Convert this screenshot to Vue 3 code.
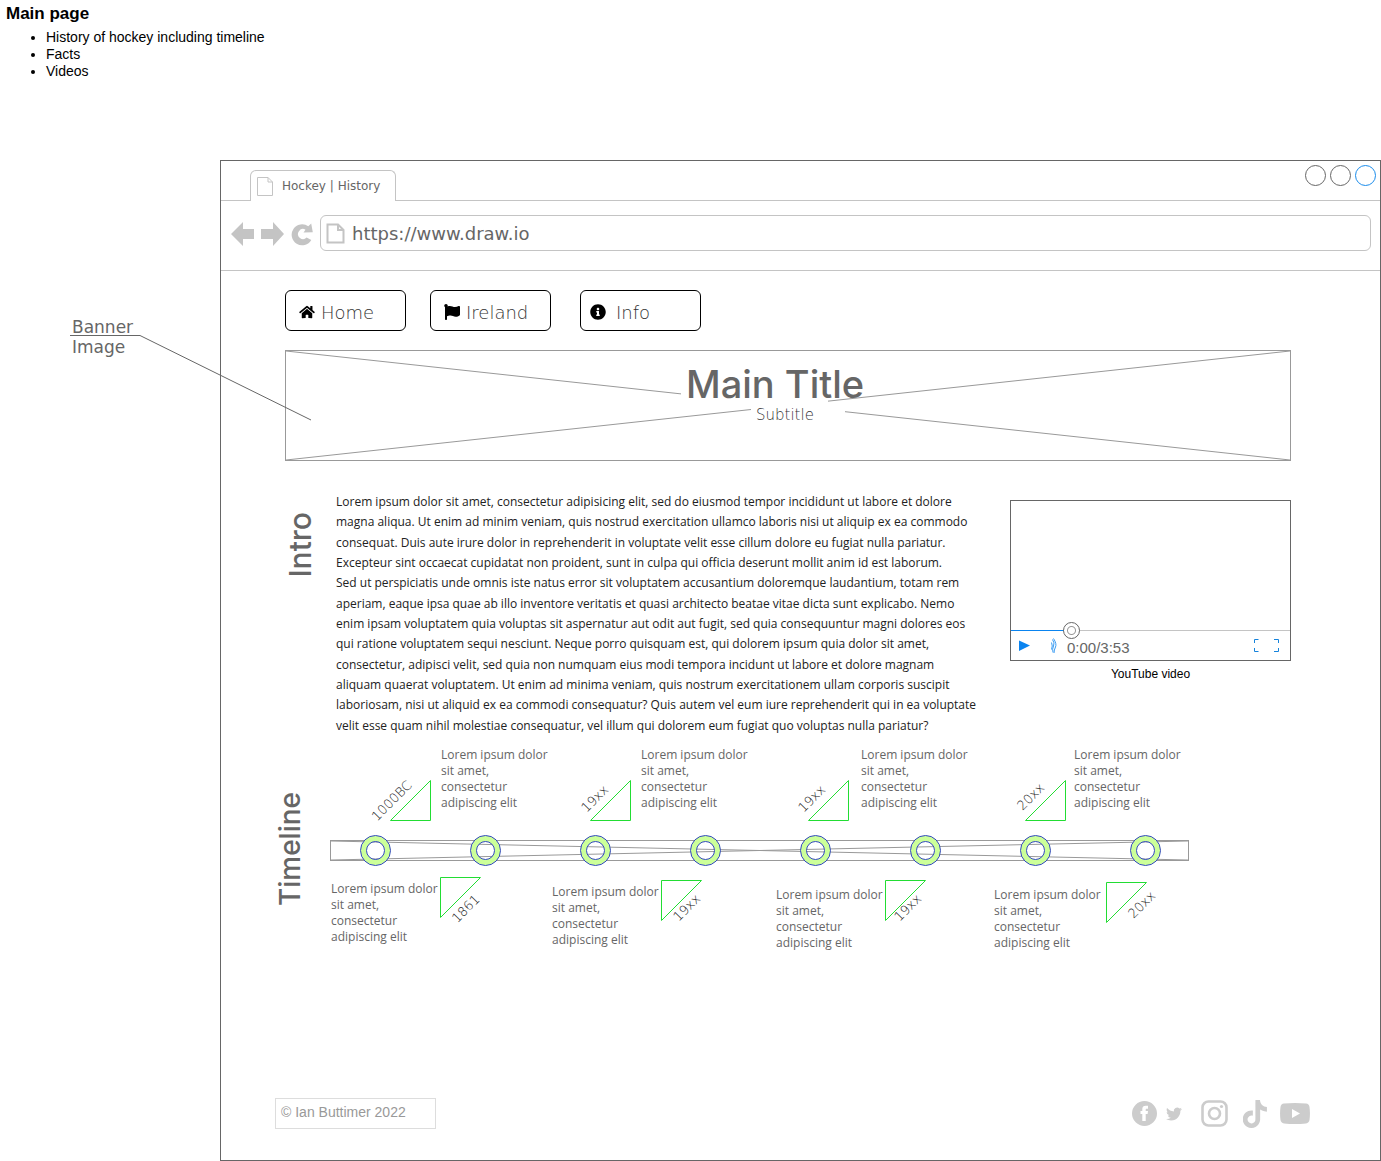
<script setup>
import { ref } from 'vue'

const position = ref(20)

const notes = ['History of hockey including timeline', 'Facts', 'Videos']

const intro = [
  [
    'Lorem ipsum dolor sit amet, consectetur adipisicing elit, sed do eiusmod tempor incididunt ut labore et dolore',
    'magna aliqua. Ut enim ad minim veniam, quis nostrud exercitation ullamco laboris nisi ut aliquip ex ea commodo',
    'consequat. Duis aute irure dolor in reprehenderit in voluptate velit esse cillum dolore eu fugiat nulla pariatur.',
    'Excepteur sint occaecat cupidatat non proident, sunt in culpa qui officia deserunt mollit anim id est laborum.',
  ],
  [
    'Sed ut perspiciatis unde omnis iste natus error sit voluptatem accusantium doloremque laudantium, totam rem',
    'aperiam, eaque ipsa quae ab illo inventore veritatis et quasi architecto beatae vitae dicta sunt explicabo. Nemo',
    'enim ipsam voluptatem quia voluptas sit aspernatur aut odit aut fugit, sed quia consequuntur magni dolores eos',
    'qui ratione voluptatem sequi nesciunt. Neque porro quisquam est, qui dolorem ipsum quia dolor sit amet,',
    'consectetur, adipisci velit, sed quia non numquam eius modi tempora incidunt ut labore et dolore magnam',
    'aliquam quaerat voluptatem. Ut enim ad minima veniam, quis nostrum exercitationem ullam corporis suscipit',
    'laboriosam, nisi ut aliquid ex ea commodi consequatur? Quis autem vel eum iure reprehenderit qui in ea voluptate',
    'velit esse quam nihil molestiae consequatur, vel illum qui dolorem eum fugiat quo voluptas nulla pariatur?',
  ],
]

const eventText = ['Lorem ipsum dolor', 'sit amet,', 'consectetur', 'adipiscing elit']

// Canvas coordinates: flag = triangle corner, date = centre of the slanted label, text = top left of the note
const events = [
  { date: '1000BC', up: true, flag: [60, 40], label: [62, 61], text: [111, 7] },
  { date: '1861', up: false, flag: [110, 137], label: [136, 169], text: [1, 141] },
  { date: '19xx', up: true, flag: [260, 40], label: [265, 59], text: [311, 7] },
  { date: '19xx', up: false, flag: [331, 140], label: [357, 168], text: [222, 144] },
  { date: '19xx', up: true, flag: [478, 40], label: [482, 59], text: [531, 7] },
  { date: '19xx', up: false, flag: [555, 140], label: [578, 168], text: [446, 147] },
  { date: '20xx', up: true, flag: [695, 40], label: [701, 57], text: [744, 7] },
  { date: '20xx', up: false, flag: [776, 142], label: [812, 165], text: [664, 147] },
]

const at = ([x, y]) => ({ left: x + 'px', top: y + 'px' })
</script>

<template>
  <div class="page">
    <header class="notes">
      <h1>Main page</h1>
      <ul>
        <li v-for="note in notes" :key="note">{{ note }}</li>
      </ul>
    </header>

    <aside class="callout">
      <span>Banner</span>
      <span>Image</span>
      <svg width="242" height="88" viewBox="0 0 242 88" aria-hidden="true">
        <path d="M0 1.5H70L241 86" fill="none" stroke="#666" />
      </svg>
    </aside>

    <div class="browser">
      <div class="tabs">
        <div class="tab">
          <svg width="16" height="19" viewBox="0 0 16 19" aria-hidden="true">
            <path d="M.5.5H11L15.500 5V18.500H.5ZM11 .5V5H15.500" fill="#fff" stroke="#c4c4c4" />
          </svg>
          <span>Hockey | History</span>
        </div>
        <div class="controls">
          <button type="button" aria-label="Minimise"></button>
          <button type="button" aria-label="Maximise"></button>
          <button type="button" aria-label="Close" class="close"></button>
        </div>
      </div>

      <div class="toolbar">
        <button type="button" aria-label="Back">
          <svg width="24" height="26" viewBox="0 0 24 26"><path d="M0 13L12 1V8H23V18H12V25Z" /></svg>
        </button>
        <button type="button" aria-label="Forward">
          <svg width="24" height="26" viewBox="0 0 24 26"><path d="M23 13L12 1V8H0V18H12V25Z" /></svg>
        </button>
        <button type="button" aria-label="Reload" class="reload">
          <svg width="22" height="24" viewBox="0 0 22 24">
            <path d="M17.300 4.200L20.200 1.500L21.800 10.200L12.500 10.600L14.500 7.700A5 5 0 1 0 15.600 15.600L20.300 17.900A10.500 10.500 0 1 1 17.300 4.200Z" />
          </svg>
        </button>
        <label class="address">
          <svg width="19" height="21" viewBox="0 0 19 21" aria-hidden="true">
            <path d="M1.500 1.500H12L17.500 7V19.500H1.500ZM12 1.500V7H17.500" fill="#fff" stroke="#c4c4c4" stroke-width="2" />
          </svg>
          <input type="text" value="https://www.draw.io" aria-label="Address" />
        </label>
      </div>

      <main class="site">
        <nav>
          <a href="#home">
            <svg width="16" height="14" viewBox="0 0 576 512"><path d="M280.37 148.26L96 300.11V464a16 16 0 0 0 16 16l112.06-.29a16 16 0 0 0 15.92-16V368a16 16 0 0 1 16-16h64a16 16 0 0 1 16 16v95.64a16 16 0 0 0 16 16.05L464 480a16 16 0 0 0 16-16V300L295.67 148.26a12.19 12.19 0 0 0-15.3 0zM571.6 251.47L488 182.56V44.05a12 12 0 0 0-12-12h-56a12 12 0 0 0-12 12v72.61L318.47 43a48 48 0 0 0-61 0L4.34 251.47a12 12 0 0 0-1.6 16.9l25.500 31A12 12 0 0 0 45.150 301l235.220-193.740a12.190 12.190 0 0 1 15.300 0L530.900 301a12 12 0 0 0 16.900-1.600l25.500-31a12 12 0 0 0-1.700-16.930z" /></svg>
            <span>Home</span>
          </a>
          <a href="#ireland">
            <svg width="16" height="16" viewBox="0 0 512 512"><path d="M349.565 98.783C295.978 98.783 251.721 64 184.348 64c-24.955 0-47.309 4.384-68.045 12.013a55.947 55.947 0 0 0 3.586-23.562C118.117 24.015 94.806 1.206 66.338.048 34.345-1.254 8 24.296 8 56c0 19.026 9.497 35.825 24 45.945V488c0 13.255 10.745 24 24 24h16c13.255 0 24-10.745 24-24v-94.4c28.311-12.064 63.582-22.122 114.435-22.122 53.588 0 97.844 34.783 165.217 34.783 48.169 0 86.667-16.294 122.505-40.858C506.84 359.452 512 349.571 512 339.045v-243.100c0-23.393-24.269-38.870-45.485-29.016-34.338 15.948-76.454 31.854-116.950 31.854z" /></svg>
            <span>Ireland</span>
          </a>
          <a href="#info" class="info">
            <svg width="16" height="16" viewBox="0 0 512 512"><path d="M256 8C119.043 8 8 119.083 8 256c0 136.997 111.043 248 248 248s248-111.003 248-248C504 119.083 392.957 8 256 8zm0 110c23.196 0 42 18.804 42 42s-18.804 42-42 42-42-18.804-42-42 18.804-42 42-42zm56 254c0 6.627-5.373 12-12 12h-88c-6.627 0-12-5.373-12-12v-24c0-6.627 5.373-12 12-12h12v-64h-12c-6.627 0-12-5.373-12-12v-24c0-6.627 5.373-12 12-12h64c6.627 0 12 5.373 12 12v100h12c6.627 0 12 5.373 12 12v24z" /></svg>
            <span>Info</span>
          </a>
        </nav>

        <section class="banner">
          <svg class="cross" viewBox="0 0 100 100" preserveAspectRatio="none" aria-hidden="true">
            <path d="M0 0L100 100M0 100L100 0" />
          </svg>
          <div class="titles">
            <h2>Main Title</h2>
            <p>Subtitle</p>
          </div>
        </section>

        <section class="intro">
          <h3>Intro</h3>
          <article>
            <p v-for="(paragraph, i) in intro" :key="i">
              <span v-for="line in paragraph" :key="line">{{ line }}</span>
            </p>
          </article>
          <figure>
            <div class="player">
              <div class="screen"></div>
              <input v-model="position" type="range" min="0" max="100" aria-label="Playback position" />
              <div class="buttons">
                <button type="button" aria-label="Play">
                  <svg width="11" height="12" viewBox="0 0 11 12"><path d="M0 .5L11 5.500L0 11Z" fill="#0a84f0" /></svg>
                </button>
                <button type="button" aria-label="Volume" class="volume">
                  <svg width="6" height="16" viewBox="0 0 6 16">
                    <path d="M.5 4.500Q2 8 .5 11.500M1.500 1.500Q4 5 2.500 8T2 14.500M2.500 .5Q6 6 4.500 9T3 15" fill="none" stroke="#3a9cf3" />
                  </svg>
                </button>
                <span>0:00/3:53</span>
                <button type="button" aria-label="Full screen" class="full">
                  <svg width="26" height="14" viewBox="0 0 26 14">
                    <path d="M5.500 .5H1.500V4M1.500 9V12.500H5.500M21 .5H25.500V4M25.500 9V12.500H21" fill="none" stroke="#1583dc" />
                  </svg>
                </button>
              </div>
            </div>
            <figcaption>YouTube video</figcaption>
          </figure>
        </section>

        <section class="timeline">
          <h3>Timeline</h3>
          <div class="canvas">
            <div class="bar">
              <svg class="cross" viewBox="0 0 100 100" preserveAspectRatio="none" aria-hidden="true">
                <path d="M0 0L100 100M0 100L100 0" />
              </svg>
              <svg v-for="n in 8" :key="n" class="ring" width="31" height="31" viewBox="0 0 31 31" aria-hidden="true">
                <circle cx="15.5" cy="15.5" r="12" fill="none" stroke="#ccff99" stroke-width="6" />
                <circle cx="15.5" cy="15.5" r="15" fill="none" stroke="#3348c0" />
                <circle cx="15.5" cy="15.5" r="9" fill="none" stroke="#3348c0" />
              </svg>
            </div>
            <template v-for="(event, i) in events" :key="i">
              <svg class="flag" :style="at(event.flag)" width="42" height="42" viewBox="0 0 42 42" aria-hidden="true">
                <path :d="event.up ? 'M.5 40.5H40.5V.5Z' : 'M.5 .5H40.5L.5 40.5Z'" />
              </svg>
              <time :style="at(event.label)">{{ event.date }}</time>
              <p :style="at(event.text)">
                <span v-for="line in eventText" :key="line">{{ line }}</span>
              </p>
            </template>
          </div>
        </section>

        <footer>
          <p>© Ian Buttimer 2022</p>
          <div class="social">
            <a href="#facebook" aria-label="Facebook">
              <svg width="25" height="25" viewBox="0 0 25 25">
                <path d="M12.500 0A12.500 12.500 0 1 0 12.500 25A12.500 12.500 0 1 0 12.500 0ZM10.300 20V13H8.500V10H10.300V8.200C10.300 5.800 11.500 4.700 13.800 4.700H16V7.700H14.800C13.900 7.700 13.700 8.100 13.700 8.900V10H16L15.600 13H13.700V20Z" fill-rule="evenodd" />
              </svg>
            </a>
            <a href="#twitter" aria-label="Twitter" class="twitter">
              <svg width="16" height="16" viewBox="0 0 24 24"><path d="M23.953 4.570a10 10 0 01-2.825.775 4.958 4.958 0 002.163-2.723c-.951.555-2.005.959-3.127 1.184a4.920 4.920 0 00-8.384 4.482C7.690 8.095 4.067 6.130 1.640 3.162a4.822 4.822 0 00-.666 2.475c0 1.710.870 3.213 2.188 4.096a4.904 4.904 0 01-2.228-.616v.060a4.923 4.923 0 003.946 4.827 4.996 4.996 0 01-2.212.085 4.936 4.936 0 004.604 3.417 9.867 9.867 0 01-6.102 2.105c-.390 0-.779-.023-1.170-.067a13.995 13.995 0 007.557 2.209c9.053 0 13.998-7.496 13.998-13.985 0-.210 0-.420-.015-.630A9.935 9.935 0 0024 4.590z" /></svg>
            </a>
            <a href="#instagram" aria-label="Instagram" class="instagram">
              <svg width="27" height="27" viewBox="0 0 27 27">
                <rect x="1.500" y="1.500" width="24" height="24" rx="6" fill="none" stroke="#ccc" stroke-width="2.600" />
                <circle cx="13.500" cy="13.500" r="5.500" fill="none" stroke="#ccc" stroke-width="2.600" />
                <circle cx="20.500" cy="6.500" r="1.600" />
              </svg>
            </a>
            <a href="#tiktok" aria-label="TikTok" class="tiktok">
              <svg width="24" height="28" viewBox="1.800 0 20.700 24"><path d="M12.525.02c1.310-.020 2.610-.010 3.910-.020.080 1.530.630 3.090 1.750 4.170 1.120 1.110 2.700 1.620 4.240 1.790v4.030c-1.440-.050-2.890-.350-4.200-.970-.570-.260-1.100-.590-1.620-.930-.010 2.920.010 5.840-.020 8.750-.080 1.400-.540 2.790-1.350 3.940-1.310 1.920-3.580 3.170-5.910 3.210-1.430.080-2.860-.310-4.080-1.030-2.020-1.190-3.440-3.370-3.650-5.710-.020-.500-.030-1-.010-1.490.180-1.900 1.120-3.720 2.580-4.960 1.660-1.440 3.980-2.130 6.150-1.720.020 1.480-.040 2.960-.040 4.440-.990-.320-2.150-.230-3.020.370-.630.410-1.110 1.040-1.360 1.750-.210.510-.150 1.070-.140 1.610.240 1.640 1.820 3.020 3.500 2.870 1.120-.010 2.190-.660 2.770-1.610.190-.330.400-.670.410-1.060.100-1.790.060-3.570.070-5.360.010-4.030-.010-8.050.020-12.070z" /></svg>
            </a>
            <a href="#youtube" aria-label="YouTube" class="youtube">
              <svg width="30" height="21" viewBox="0 0 30 21">
                <path d="M4 .6Q15-.6 26 .6Q29 1 29.500 4Q30.400 10.500 29.500 17Q29 20 26 20.400Q15 21.600 4 20.400Q1 20 .5 17Q-.4 10.500 .5 4Q1 1 4 .6ZM12 6V15L20 10.500Z" fill-rule="evenodd" />
              </svg>
            </a>
          </div>
        </footer>
      </main>
    </div>
  </div>
</template>

<style>
body {
  margin: 0;
  background: #fff;
}
</style>

<style scoped>
.page {
  position: relative;
  font-family: "Liberation Sans", Arial, sans-serif;
  font-size: 14px;
  color: #000;
}

h1, h2, h3, p, ul, figure {
  margin: 0;
}

button {
  padding: 0;
  border: 0;
  background: none;
}

svg {
  display: block;
}

.notes {
  box-sizing: border-box;
  min-height: 160px;
  padding: 4px 6px;
}

.notes h1 {
  font-size: 17px;
  line-height: 20px;
}

.notes ul {
  margin-top: 5px;
  padding-left: 40px;
  line-height: 17px;
}

.callout {
  position: absolute;
  top: 317px;
  left: 70px;
  z-index: 1;
  pointer-events: none;
  font-family: "DejaVu Sans", Verdana, sans-serif;
  font-size: 17px;
  line-height: 20px;
  color: #666;
}

.callout span {
  display: block;
  padding-left: 2px;
}

.callout svg {
  position: absolute;
  top: 17px;
  left: 0;
}

.browser {
  margin-left: 220px;
  border: 1px solid #666;
}

.tabs {
  display: flex;
  justify-content: space-between;
  box-sizing: border-box;
  height: 40px;
  padding: 4px 4px 0 29px;
  border-bottom: 1px solid #c4c4c4;
}

.tab {
  display: flex;
  align-items: center;
  gap: 9px;
  box-sizing: border-box;
  height: 31px;
  margin-top: 5px;
  padding: 0 15px 0 6px;
  border: 1px solid #c4c4c4;
  border-bottom: 0;
  border-radius: 6px 6px 0 0;
  background: #fff;
  font-family: "DejaVu Sans", Verdana, sans-serif;
  font-size: 12px;
  color: #666;
}

.controls {
  display: flex;
  gap: 4px;
}

.controls button {
  width: 21px;
  height: 21px;
  border: 1px solid #666;
  border-radius: 50%;
}

.controls .close {
  border-color: #1a8ceb;
}

.toolbar {
  display: flex;
  align-items: flex-start;
  box-sizing: border-box;
  height: 70px;
  padding: 14px 9px 0 10px;
  border-bottom: 1px solid #c4c4c4;
}

.toolbar > button {
  margin: 6px 6px 0 0;
  fill: #c4c4c4;
}

.toolbar .reload {
  margin: 7px 7px 0 0;
}

.address {
  display: flex;
  flex: 1;
  align-items: center;
  gap: 7px;
  box-sizing: border-box;
  height: 36px;
  padding: 0 5px;
  border: 1px solid #c4c4c4;
  border-radius: 6px;
}

.address input {
  flex: 1;
  min-width: 0;
  padding: 0;
  border: 0;
  outline: 0;
  background: none;
  font-family: "DejaVu Sans", Verdana, sans-serif;
  font-size: 18px;
  color: #666;
}

.site {
  padding: 19px 89px 31px 64px;
}

nav {
  display: flex;
  gap: 24px;
}

nav a {
  display: flex;
  align-items: center;
  gap: 6px;
  box-sizing: border-box;
  width: 121px;
  height: 41px;
  padding: 3px 0 0 13px;
  border: 1px solid #000;
  border-radius: 6px;
  font-family: "DejaVu Sans", sans-serif;
  font-size: 18px;
  font-weight: 200;
  color: #333;
  text-decoration: none;
}

nav .info {
  gap: 10px;
  margin-left: 5px;
  padding-left: 9px;
}

nav svg {
  fill: #000;
}

.banner {
  position: relative;
  box-sizing: border-box;
  height: 111px;
  margin-top: 19px;
  padding-top: 13px;
  border: 1px solid #999;
}

.cross {
  position: absolute;
  inset: 0;
  width: 100%;
  height: 100%;
  fill: none;
  stroke: #999;
}

.cross path {
  vector-effect: non-scaling-stroke;
}

.titles {
  position: relative;
  width: 214px;
  margin: 0 auto;
  color: #666;
  white-space: nowrap;
}

.titles h2 {
  width: 142px;
  height: 38px;
  padding-left: 5px;
  background: #fff;
  font-family: Inter, sans-serif;
  font-size: 38px;
  font-weight: 500;
  line-height: 40px;
}

.titles p {
  width: 89px;
  margin-left: 70px;
  padding-left: 5px;
  background: #fff;
  font-family: "DejaVu Sans", sans-serif;
  font-size: 15px;
  font-weight: 200;
  line-height: 26px;
  color: #333;
}

h3 {
  flex: none;
  font-family: Inter, sans-serif;
  font-size: 28px;
  font-weight: 500;
  line-height: 32px;
  color: #666;
  writing-mode: vertical-rl;
  transform: rotate(180deg);
}

.intro {
  display: flex;
  align-items: flex-start;
  margin-top: 31px;
}

.intro h3 {
  margin: 20px 0 0 -1px;
  font-size: 30px;
}

.intro article {
  display: grid;
  flex: 1;
  grid-auto-rows: 1fr;
  align-items: center;
  height: 244px;
  margin-left: 20px;
  font-family: "Open Sans", "Noto Sans", sans-serif;
  font-size: 12px;
  line-height: 20px;
  color: #222;
  white-space: nowrap;
}

.intro article p {
  display: contents;
}

figure {
  flex: none;
  width: 281px;
  margin-top: 8px;
}

.player {
  border: 1px solid #666;
}

.screen {
  height: 121px;
}

.player input {
  display: block;
  width: 100%;
  height: 17px;
  margin: 0;
  appearance: none;
  background: linear-gradient(to right, #0a84f0 60px, #c4c4c4 60px) center / 100% 1px no-repeat;
}

.player input::-webkit-slider-thumb {
  width: 17px;
  height: 17px;
  appearance: none;
  border: 1px solid #666;
  border-radius: 50%;
  background: radial-gradient(circle, #fff 3px, #999 4px, #fff 5px);
}

.buttons {
  display: flex;
  align-items: flex-start;
  height: 21px;
  padding: 0 11px 0 8px;
  color: #666;
  font-size: 15px;
  line-height: 18px;
}

.buttons button {
  display: flex;
  align-items: center;
  height: 14px;
}

.buttons .volume {
  margin: 0 10px 0 21px;
}

.buttons .full {
  margin-left: auto;
}

figcaption {
  margin-top: 6px;
  font-size: 12px;
  line-height: 14px;
  text-align: center;
}

.timeline {
  display: flex;
  align-items: flex-start;
  margin-top: 4px;
  padding-right: 102px;
}

.timeline h3 {
  margin: 52px 0 0 -11px;
}

.canvas {
  position: relative;
  flex: 1;
  height: 260px;
  margin-left: 24px;
}

.bar {
  position: relative;
  display: flex;
  align-items: center;
  justify-content: space-between;
  box-sizing: border-box;
  height: 21px;
  margin-top: 100px;
  padding: 0 27px 0 29px;
  border: 1px solid #999;
}

.ring {
  position: relative;
  flex: none;
}

.flag {
  position: absolute;
  fill: none;
  stroke: #22dd33;
}

.canvas time {
  position: absolute;
  font-family: "DejaVu Sans", sans-serif;
  font-size: 13px;
  font-weight: 200;
  line-height: 16px;
  color: #222;
  transform: translate(-50%, -50%) rotate(-45deg);
}

.canvas p {
  position: absolute;
  font-family: "Open Sans", "Noto Sans", sans-serif;
  font-size: 12px;
  line-height: 16px;
  color: #666;
  white-space: nowrap;
}

.canvas p span {
  display: block;
}

footer {
  display: flex;
  align-items: center;
  justify-content: space-between;
  margin: 98px -19px 0 -10px;
}

footer p {
  box-sizing: border-box;
  width: 161px;
  padding: 0 5px 2px;
  border: 1px solid #ddd;
  font-size: 14px;
  line-height: 27px;
  color: #999;
}

.social {
  display: flex;
  align-items: center;
  fill: #ccc;
}

.twitter {
  margin: 0 19px 0 9px;
}

.tiktok {
  margin: 0 13px 0 15px;
}
</style>
